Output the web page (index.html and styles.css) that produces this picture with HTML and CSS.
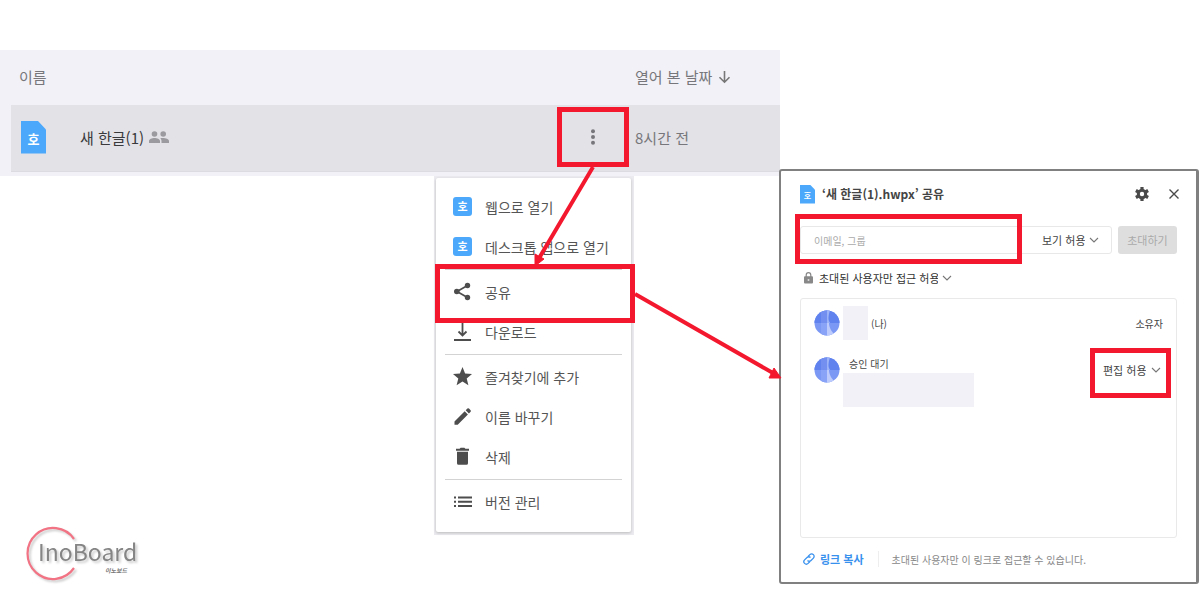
FILE: index.html
```html
<!DOCTYPE html>
<html lang="ko">
<head>
    <meta charset="UTF-8">
    <meta name="viewport" content="width=device-width, initial-scale=1.0">
    <title>한글 문서 공유</title>
    <link rel="stylesheet" href="styles.css">
</head>
<body>
    <svg class="symbols" aria-hidden="true">
        <symbol id="chevron" viewBox="0 0 10 10">
            <path d="M1 3l4 4 4-4" fill="none" stroke="#777" stroke-width="1.1"/>
        </symbol>
        <symbol id="avatar" viewBox="0 0 26 26">
            <clipPath id="round"><circle cx="13" cy="13" r="12.500"/></clipPath>
            <g clip-path="url(#round)">
                <rect width="26" height="26" fill="#7b98f4"/>
                <path d="M0 0h26v13H0z" fill="#5f82ee"/>
                <path d="M7 0h6v13H7z" fill="#7390f0"/>
                <path d="M13 0h3c-2 7-2 10 0 13h-3z" fill="#9db3f8"/>
                <path d="M13 13h2c0 5 3 9 7 13h-9z" fill="#bccbfb"/>
                <path d="M7 13h6v13H7z" fill="#89a3f6"/>
            </g>
        </symbol>
    </svg>

    <main class="page">
        <div class="browser">
            <section class="files">
                <div class="files-head">
                    <span class="name">이름</span>
                    <span class="date">열어 본 날짜
                        <svg width="13" height="14" viewBox="0 0 13 14"><path d="M6.500 1v11M1.500 7.200l5 5 5-5" fill="none" stroke="#777" stroke-width="1.6"/></svg>
                    </span>
                </div>
                <div class="file-row">
                    <span class="doc">호</span>
                    <span class="file-name">새 한글(1)</span>
                    <svg width="20" height="12" viewBox="0 0 20 12" fill="#9b9b9f">
                        <circle cx="5.500" cy="3" r="2.800"/><circle cx="14.200" cy="3" r="2.800"/>
                        <path d="M0 12v-2c0-2 3-3 5.500-3S11 8 11 10v2zM12.500 12v-2c0-1.200-.5-2.100-1.300-2.800C15 6.500 20 7.500 20 10v2z"/>
                    </svg>
                    <button class="more marked" aria-label="더보기">
                        <svg width="6" height="16" viewBox="0 0 6 16" fill="#77777b"><circle cx="3" cy="2.300" r="2"/><circle cx="3" cy="8" r="2"/><circle cx="3" cy="13.700" r="2"/></svg>
                    </button>
                    <span class="date">8시간 전</span>
                </div>
            </section>

            <div class="lower">
                <svg class="logo" width="114" height="60" viewBox="0 0 114 60" role="img" aria-label="InoBoard">
                    <path class="logo-shadow" d="M48 14A25.500 25.500 0 1 0 48 43" stroke="#f17384" stroke-width="2.200" fill="none"/>
                    <text class="logo-name" x="12" y="36">InoBoard</text>
                    <text class="logo-sub" x="79" y="48">이노보드</text>
                </svg>
                <div class="menu-back">
                    <ul class="menu">
                        <li><button><span class="app">호</span>웹으로 열기</button></li>
                        <li><button><span class="app">호</span>데스크톱 앱으로 열기</button></li>
                        <li class="line"></li>
                        <li><button class="share marked">
                            <svg width="19" height="19" viewBox="0 0 19 19" fill="#4d4d4d"><path d="M14.500 3.500L4 9.500l10.500 6" fill="none" stroke="#4d4d4d" stroke-width="1.700"/><circle cx="14.500" cy="3.500" r="2.700"/><circle cx="3.800" cy="9.500" r="2.800"/><circle cx="14.500" cy="15.500" r="2.700"/></svg>공유</button></li>
                        <li><button>
                            <svg width="19" height="19" viewBox="0 0 19 19" fill="none" stroke="#4d4d4d" stroke-width="1.800"><path d="M9.500 0v13M5.500 9.500l4 4 4-4M1 18h17"/></svg>다운로드</button></li>
                        <li class="line"></li>
                        <li><button>
                            <svg width="19" height="19" viewBox="0 0 19 19" fill="#4d4d4d"><path d="M9.500 0l2.600 6.500 6.900.5-5.300 4.500 1.700 6.800-5.900-3.700-5.900 3.700 1.700-6.800L0 7l6.900-.5z"/></svg>즐겨찾기에 추가</button></li>
                        <li><button>
                            <svg width="19" height="19" viewBox="0 0 19 19" fill="#4d4d4d"><path d="M1.500 14.500L11.700 4.300l3.200 3.200L4.700 17.700H1.500zM12.700 3.300L14.400 1.600q.8-.7 1.600 0l1.600 1.600q.7.800 0 1.600L15.900 6.500z"/></svg>이름 바꾸기</button></li>
                        <li><button>
                            <svg width="19" height="19" viewBox="0 0 19 19" fill="#4d4d4d"><path d="M3 1.800h3.600l1-1h3.800l1 1H16v1.900H3zM4 4.800h11v11.400q0 1.600-1.600 1.600H5.600Q4 17.800 4 16.200z"/></svg>삭제</button></li>
                        <li class="line"></li>
                        <li><button>
                            <svg width="19" height="19" viewBox="0 0 19 19" fill="#4d4d4d"><path d="M1 4.500h2v2H1zM1 8.700h2v2H1zM1 13h2v2H1zM5 4.500h14v2H5zM5 8.700h14v2H5zM5 13h14v2H5z"/></svg>버전 관리</button></li>
                    </ul>
                </div>
            </div>
        </div>

        <section class="dialog">
            <header class="dialog-head">
                <span class="doc small">호</span>
                <h1>‘새 한글(1).hwpx’ 공유</h1>
                <button class="plain" aria-label="설정">
                    <svg width="14" height="14" viewBox="0 0 14 14"><circle cx="7" cy="7" r="3.700" fill="none" stroke="#4a4a4a" stroke-width="3"/><path d="M7 0v3M7 11v3M.9 3.500l2.600 1.500M10.500 9l2.600 1.500M.9 10.500L3.500 9M10.500 5l2.600-1.500" stroke="#4a4a4a" stroke-width="3.200"/></svg>
                </button>
                <button class="plain" aria-label="닫기">
                    <svg width="10" height="10" viewBox="0 0 10 10"><path d="M.5.5l9 9M9.500.5l-9 9" stroke="#4a4a4a" stroke-width="1.400"/></svg>
                </button>
            </header>

            <form class="invite">
                <div class="invite-field">
                    <div class="mail marked"><input type="text" placeholder="이메일, 그룹" aria-label="이메일, 그룹"></div>
                    <div class="pick">
                        <select aria-label="초대 권한"><option>보기 허용</option></select>
                        <svg width="10" height="10"><use href="#chevron"/></svg>
                    </div>
                </div>
                <button type="button" class="send" disabled>초대하기</button>
            </form>

            <div class="access">
                <svg width="9" height="12" viewBox="0 0 9 12"><path d="M2.200 5V3a2.300 2.300 0 0 1 4.600 0v2" fill="none" stroke="#888" stroke-width="1.200"/><rect y="4.300" width="9" height="7.200" rx="1" fill="#888"/><circle cx="4.500" cy="7.900" r="1" fill="#ddd"/></svg>
                <div class="pick">
                    <select aria-label="접근 범위"><option>초대된 사용자만 접근 허용</option></select>
                    <svg width="10" height="10"><use href="#chevron"/></svg>
                </div>
            </div>

            <ul class="members">
                <li>
                    <svg width="26" height="26"><use href="#avatar"/></svg>
                    <span class="blank short"></span>
                    <span class="me">(나)</span>
                    <span class="owner">소유자</span>
                </li>
                <li>
                    <svg width="26" height="26"><use href="#avatar"/></svg>
                    <div class="waiting">
                        <span>승인 대기</span>
                        <span class="blank long"></span>
                    </div>
                    <div class="pick edit marked">
                        <select aria-label="편집 권한"><option>편집 허용</option></select>
                        <svg width="10" height="10"><use href="#chevron"/></svg>
                    </div>
                </li>
            </ul>

            <footer class="dialog-foot">
                <a href="#">
                    <svg width="12" height="12" viewBox="0 0 12 12" fill="none" stroke="#3991ee" stroke-width="1.300"><path d="M5.200 3.300l1.700-1.700a2.400 2.400 0 0 1 3.500 3.500L8 7.500a2.400 2.400 0 0 1-3.500 0M6.800 8.700l-1.700 1.700a2.400 2.400 0 0 1-3.500-3.500L4 4.500a2.400 2.400 0 0 1 3.500 0"/></svg>
                    링크 복사
                </a>
                <p>초대된 사용자만 이 링크로 접근할 수 있습니다.</p>
            </footer>
        </section>

        <!-- 단계 안내 화살표 -->
        <svg class="arrows" viewBox="0 0 1200 600" aria-hidden="true">
            <path d="M593 167L538 260M635 294l138 79" stroke="#f4182f" stroke-width="4"/>
            <path d="M535 266v-12l9 5zM781 378h-12l5-10z" fill="#f4182f" stroke="#f4182f"/>
        </svg>
    </main>
</body>
</html>
```
FILE: styles.css
```css
* {
    box-sizing: border-box;
}
body {
    margin: 0;
    background-color: #fff;
    color: #444;
    font-family: "Noto Sans CJK KR", sans-serif;
    font-size: 11px;
}
button, input, select {
    font: inherit;
    color: inherit;
    border: none;
    background: none;
    padding: 0;
    margin: 0;
}
button {
    cursor: pointer;
}
ul {
    list-style: none;
    margin: 0;
    padding: 0;
}
svg {
    flex: none;
    display: block;
}
.symbols {
    position: absolute;
    width: 0;
    height: 0;
}
.page {
    position: relative;
    display: grid;
    grid-template-columns: minmax(0, 65fr) minmax(0, 35fr);
    align-items: start;
    padding-top: 50px;
}

/* 한글 문서 아이콘 */
.doc, .app {
    flex: none;
    background-color: #4ba8fb;
    color: #fff;
    font-weight: bold;
    text-align: center;
}
.doc {
    width: 25px;
    height: 33px;
    padding-top: 3px;
    font-size: 13px;
    line-height: 30px;
    clip-path: polygon(0 0, 66% 0, 100% 27%, 100% 100%, 0 100%);
}
.doc.small {
    width: 15px;
    height: 19px;
    padding-top: 2px;
    font-size: 8px;
    line-height: 17px;
}
.app {
    width: 19px;
    height: 19px;
    border-radius: 3px;
    font-size: 11px;
    line-height: 18px;
}

/* 빨간 강조 테두리 */
.marked {
    position: relative;
}
.marked::after {
    content: "";
    position: absolute;
    inset: 0;
    border: 5px solid #f4182f;
    pointer-events: none;
}

/* 파일 목록 */
.files {
    background-color: #f2f1f7;
    padding: 0 0 4px 11px;
    font-size: 15px;
    color: #77777b;
}
.files-head, .file-row {
    display: flex;
    align-items: center;
}
.files-head {
    height: 55px;
    padding: 0 0 2px 8px;
}
.files .date {
    display: flex;
    align-items: center;
    gap: 6px;
    width: 145px;
    margin-left: auto;
}
.file-row {
    height: 67px;
    padding: 0 0 2px 10px;
    background-color: #e3e2e7;
    border-bottom: 1px solid #dcdbe1;
}
.file-name {
    margin: 0 5px 0 34px;
    color: #3a3a3c;
}
.more {
    display: flex;
    align-items: center;
    justify-content: center;
    width: 72px;
    height: 60px;
    margin-left: auto;
}
.files .more + .date {
    margin-left: 6px;
}

/* 컨텍스트 메뉴 */
.lower {
    display: flex;
    align-items: flex-start;
    justify-content: space-between;
    padding: 0 146px 0 26px;
}
.logo {
    margin-top: 349px;
}
.logo-shadow, .logo-name {
    filter: drop-shadow(2px 2px 1px #ccc);
}
.logo-name {
    font-size: 23px;
    fill: #858585;
}
.logo-sub {
    font-size: 6px;
    font-weight: bold;
    font-style: italic;
    fill: #777;
}
.menu-back {
    width: 200px;
    padding: 2px 3px 3px 2px;
    background-color: #ebebf0;
}
.menu {
    padding: 9px 0 10px;
    background-color: #fff;
    border-radius: 2px;
    box-shadow: 0 1px 3px #bbb;
}
.menu button {
    display: flex;
    align-items: center;
    gap: 13px;
    width: 100%;
    height: 40px;
    padding: 0 0 1px 17px;
    font-size: 14px;
    color: #555;
}
.menu .line {
    height: 5px;
    padding: 2px 9px;
}
.menu .line::before {
    content: "";
    display: block;
    height: 1px;
    background-color: #d3d3d3;
}
.share::after {
    inset: -8px -4px -11px -1px;
}

/* 공유 창 */
.dialog {
    margin: 119px 1px 0 -1px;
    padding: 13px 19px 0 19px;
    border: 2px solid #808080;
    border-right-width: 3px;
    border-radius: 3px;
    background-color: #fff;
}
.dialog-head {
    display: flex;
    align-items: center;
    height: 20px;
}
.dialog-head h1 {
    flex: 1;
    margin: 0 0 0 7px;
    font-size: 12px;
    font-weight: bold;
    line-height: 20px;
    color: #444;
}
.plain {
    display: flex;
    align-items: center;
    justify-content: center;
    width: 16px;
    height: 16px;
}
.plain + .plain {
    margin: 0 -5px 0 16px;
}
.invite {
    display: flex;
    gap: 6px;
    margin-top: 22px;
}
.invite-field {
    display: flex;
    flex: 1;
    height: 28px;
    border: 1px solid #e8e8e8;
    border-radius: 3px;
}
.mail {
    flex: 1;
}
.mail::after {
    inset: -13px 0 -11px -6px;
}
.mail input {
    width: 100%;
    height: 26px;
    padding-left: 13px;
    font-size: 10px;
    outline: none;
}
.mail input::placeholder {
    color: #aaa;
}
.pick {
    display: flex;
    align-items: center;
    gap: 4px;
}
.pick select {
    appearance: none;
    outline: none;
}
.invite .pick {
    padding: 0 12px 0 20px;
}
.send {
    width: 59px;
    height: 28px;
    border-radius: 3px;
    background-color: #dedede;
    color: #aaa;
}
.access {
    display: flex;
    align-items: center;
    gap: 6px;
    height: 20px;
    margin: 14px 0 10px;
    padding-left: 4px;
    color: #333;
}
.members {
    height: 240px;
    padding: 7px 13px;
    border: 1px solid #e9e9e9;
    border-radius: 3px;
    font-size: 10px;
}
.members li {
    display: flex;
    align-items: center;
    height: 34px;
}
.members li + li {
    align-items: flex-start;
    height: 50px;
    margin-top: 17px;
}
.blank {
    display: block;
    height: 34px;
    background-color: #f2f1f7;
}
.short {
    width: 25px;
    margin: 0 3px 0 3px;
}
.owner {
    margin-left: auto;
}
.waiting {
    margin: 0 auto 0 3px;
}
.waiting span:first-child {
    display: block;
    height: 16px;
    padding-left: 6px;
    line-height: 14px;
}
.long {
    width: 131px;
}
.edit {
    width: 81px;
    height: 50px;
    margin: -9px -8px 0 0;
    padding: 0 10px 6px 13px;
    justify-content: space-between;
    font-size: 11px;
}
.dialog-foot {
    display: flex;
    align-items: center;
    height: 44px;
    padding: 0 0 2px 3px;
}
.dialog-foot a {
    display: flex;
    align-items: center;
    gap: 5px;
    padding-right: 14px;
    border-right: 1px solid #eee;
    color: #3991ee;
    font-weight: bold;
    text-decoration: none;
}
.dialog-foot p {
    margin: 0 0 0 13px;
    font-size: 10px;
    color: #888;
}

.arrows {
    position: absolute;
    top: 0;
    left: 0;
    width: 100%;
    pointer-events: none;
}
```
